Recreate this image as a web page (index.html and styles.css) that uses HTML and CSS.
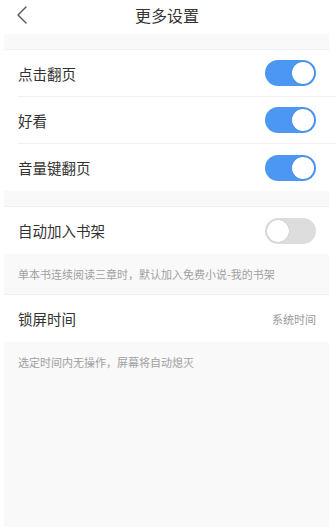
FILE: index.html
```html
<!DOCTYPE html>
<html lang="zh">
<head>
<meta charset="utf-8">
<link rel="stylesheet" href="styles.css">
</head>
<body>
<header class="topbar">
  <svg class="back" width="12" height="20" viewBox="0 0 12 20"><path d="M10 2 L2 10 L10 18" fill="none" stroke="#555" stroke-width="1.4" stroke-linecap="round" stroke-linejoin="round"/></svg>
  <h1 class="title">更多设置</h1>
</header>
<main class="content">
  <div class="gap"></div>
  <section class="group">
    <div class="row"><span class="label">点击翻页</span><span class="switch on"><span class="knob"></span></span></div>
    <div class="row"><span class="label">好看</span><span class="switch on"><span class="knob"></span></span></div>
    <div class="row"><span class="label">音量键翻页</span><span class="switch on"><span class="knob"></span></span></div>
  </section>
  <div class="gap"></div>
  <section class="group">
    <div class="row"><span class="label">自动加入书架</span><span class="switch"><span class="knob"></span></span></div>
  </section>
  <p class="desc">单本书连续阅读三章时，默认加入免费小说-我的书架</p>
  <section class="group">
    <div class="row"><span class="label">锁屏时间</span><span class="value">系统时间</span></div>
  </section>
  <p class="desc">选定时间内无操作，屏幕将自动熄灭</p>
</main>
</body>
</html>
```
FILE: styles.css
```css
* { box-sizing: border-box; }
html, body { margin: 0; padding: 0; background: #fff; }
body {
  width: 336px;
  height: 529px;
  overflow: hidden;
  font-family: "Noto Sans CJK SC", "Noto Sans", sans-serif;
  color: #333;
  display: flex;
  flex-direction: column;
}
.topbar {
  height: 34px;
  padding-bottom: 4px;
  position: relative;
  display: flex;
  align-items: center;
  justify-content: center;
}
.back { position: absolute; left: 16px; top: 5px; }
.title {
  margin: 0;
  font-size: 16px;
  font-weight: 400;
  color: #333;
  line-height: 30px;
  margin-left: -2px;
}
.content {
  flex: 1;
  margin: 0 7px 2px 4px;
  background: #f9f9f9;
  display: flex;
  flex-direction: column;
}
.gap { height: 16px; border-bottom: 1px solid #f0f0f0; }
.group { background: #fff; margin: 0 -7px 0 -4px; }
.row {
  height: 47px;
  margin-left: 18px;
  padding-right: 20px;
  display: flex;
  align-items: center;
  justify-content: space-between;
  border-bottom: 1px solid #f0f0f0;
}
.group .row:last-child { border-bottom: none; }
.label { font-size: 14.5px; color: #333; }
.value { font-size: 11px; color: #999; }
.switch {
  width: 51px;
  height: 26px;
  border-radius: 13px;
  background: #dddddd;
  position: relative;
}
.switch.on { background: #4b97f2; }
.knob {
  position: absolute;
  top: 2px;
  left: 2px;
  width: 22px;
  height: 22px;
  border-radius: 50%;
  background: #fff;
  box-shadow: 0 0 1px rgba(0,0,0,0.3);
}
.switch.on .knob { left: 27px; }
.desc {
  margin: 0;
  height: 41px;
  padding-left: 14px;
  display: flex;
  align-items: center;
  font-size: 11px;
  color: #a0a0a0;
  border-bottom: 1px solid #f0f0f0;
}
.content > .desc:last-child { border-bottom: none; height: 40px; }
```
